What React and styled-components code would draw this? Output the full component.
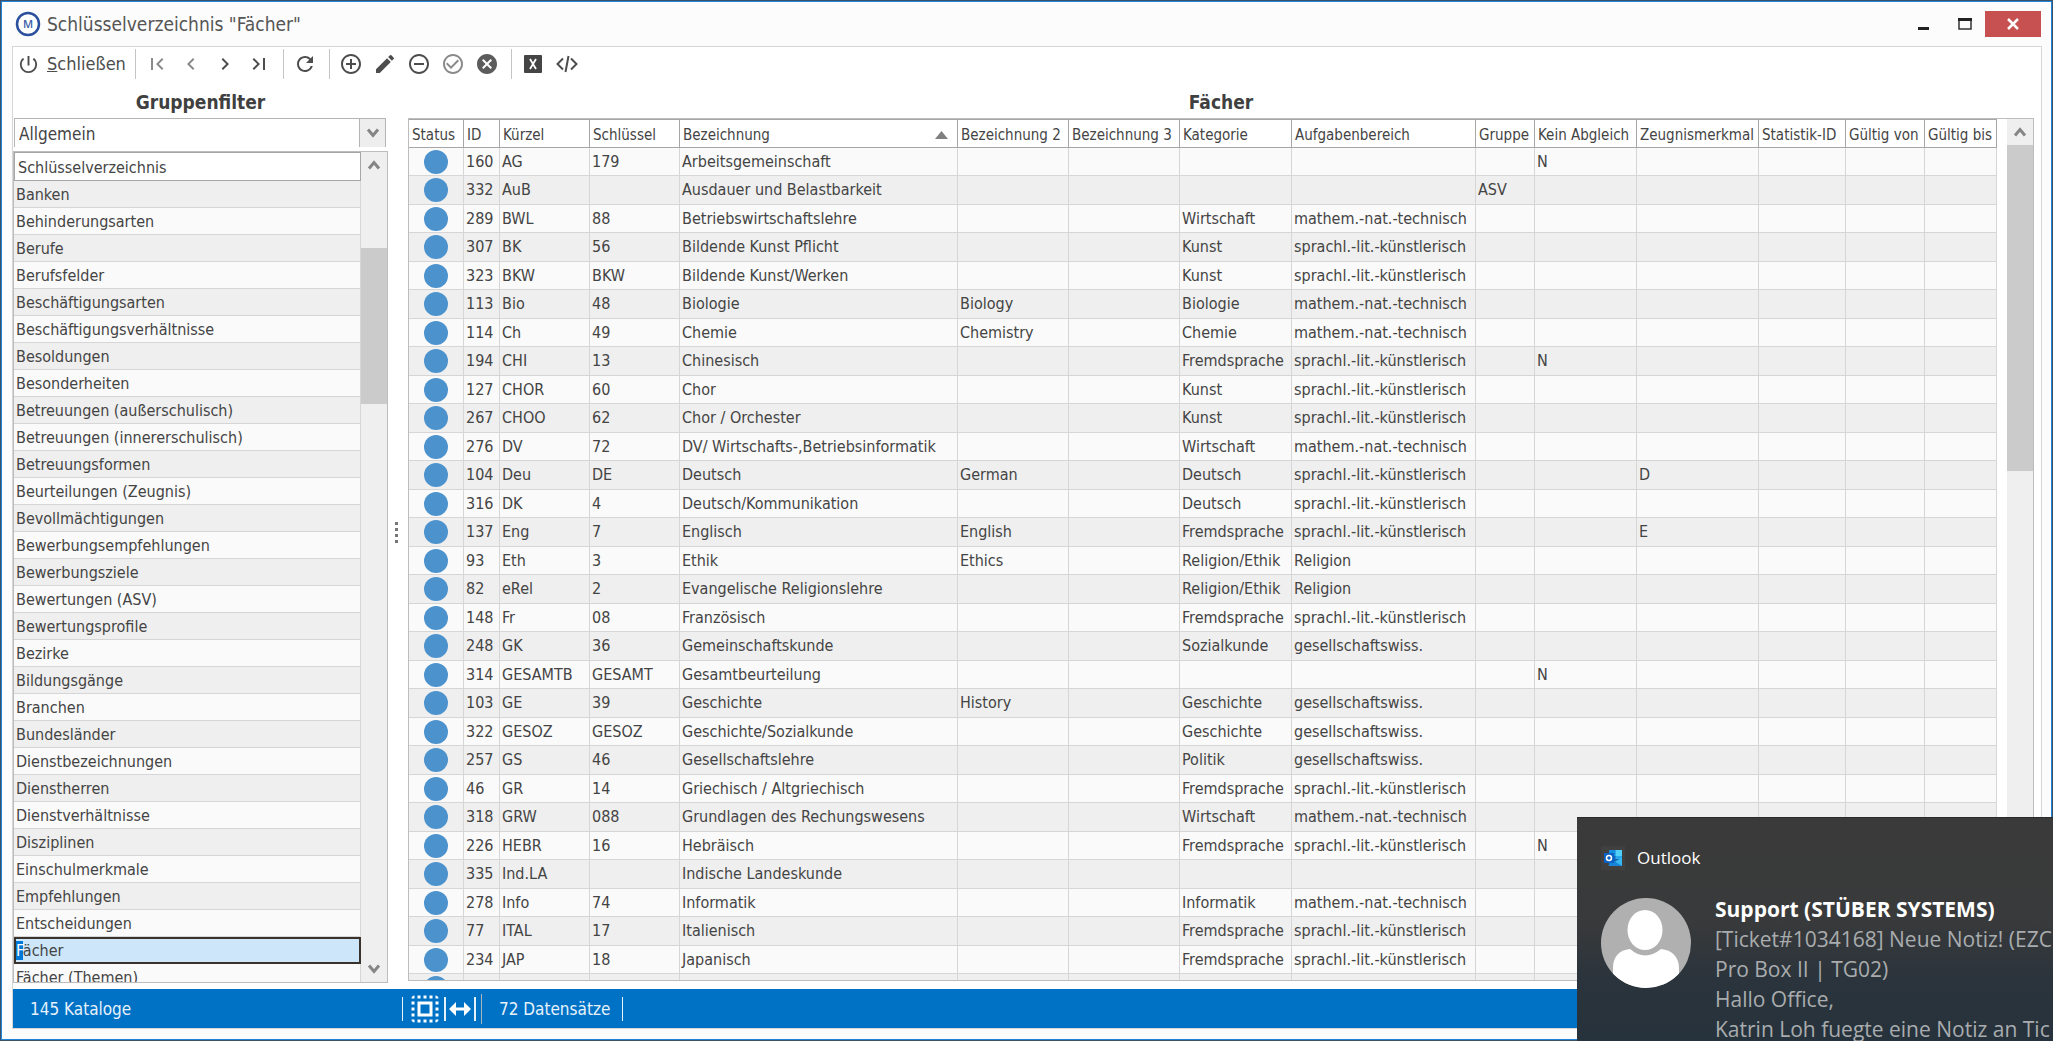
import React from "react";
import styled, { createGlobalStyle, css } from "styled-components";
import {
  MdPowerSettingsNew,
  MdFirstPage,
  MdChevronLeft,
  MdChevronRight,
  MdLastPage,
  MdRefresh,
  MdAddCircleOutline,
  MdEdit,
  MdRemoveCircleOutline,
  MdCheckCircleOutline,
  MdCancel,
  MdSelectAll,
} from "react-icons/md";

const Global = createGlobalStyle`
  * { box-sizing: border-box; }
  html, body { margin: 0; height: 100%; overflow: hidden; }
  body {
    font-family: Tahoma, "DejaVu Sans Condensed", "Noto Sans", sans-serif;
    font-size: 16px;
    line-height: 20px;
    color: #444;
  }
  button, select { font: inherit; color: inherit; }
`;

const Window = styled.div`
  height: 100vh;
  display: flex;
  flex-direction: column;
  padding: 1px 10px 11px 11px;
  background: #fcfcfc;
  border: 1px solid #3d5266;
  box-shadow: inset 0 0 0 1px #1f84dc;
  overflow: hidden;
`;

const TitleBar = styled.header`
  flex: none;
  height: 44px;
  display: flex;
  align-items: center;
  gap: 6px;
  padding: 0 1px 0 3px;
`;

const Title = styled.h1`
  flex: 1;
  margin: 0;
  font-size: 19px;
  line-height: 24px;
  font-weight: 400;
  color: #555;
`;

const WindowButton = styled.button`
  width: ${(p) => (p.$close ? 56 : 41)}px;
  height: 26px;
  padding: 0;
  border: 0;
  display: flex;
  align-items: center;
  justify-content: center;
  background: ${(p) => (p.$close ? "#c75050" : "transparent")};
`;

const WindowButtons = styled.div`
  display: flex;
`;

const Content = styled.main`
  flex: 1;
  min-height: 0;
  display: flex;
  flex-direction: column;
  background: #fff;
  border: 1px solid #d6d6d6;
`;

const Toolbar = styled.div`
  flex: none;
  display: flex;
  align-items: center;
  height: 34px;
  padding-left: 4px;
`;

const Separator = styled.span`
  width: 1px;
  height: 30px;
  margin: 0 4px 0 7px;
  background: #c4c4c4;
`;

const ToolButton = styled.button`
  width: 34px;
  height: 34px;
  padding: 0;
  border: 0;
  background: transparent;
  display: flex;
  align-items: center;
  justify-content: center;
  color: ${(p) => (p.$dim ? "#8a8a8a" : "#4d4d4d")};
`;

const CloseButton = styled(ToolButton)`
  width: auto;
  gap: 7px;
  padding-right: 2px;
  font-size: 18px;
`;

const Body = styled.div`
  flex: 1;
  min-height: 0;
  display: grid;
  grid-template-columns: 376px 15px minmax(0, 1fr);
  grid-template-rows: minmax(0, 1fr);
`;

const Panel = styled.section`
  min-width: 0;
  min-height: 0;
  display: flex;
  flex-direction: column;
  padding: ${(p) => p.$pad};
`;

const PanelTitle = styled.h2`
  flex: none;
  margin: 0;
  padding: 9px 0 4px;
  font-size: 19px;
  line-height: 24px;
  font-weight: 700;
  text-align: center;
  color: #404040;
`;

const Splitter = styled.div`
  display: flex;
  flex-direction: column;
  align-items: center;
  justify-content: center;
  gap: 3px;
`;

const Dot = styled.span`
  width: 3px;
  height: 3px;
  background: #777;
`;

const SelectWrap = styled.label`
  flex: none;
  display: grid;
  grid-template-columns: minmax(0, 1fr) 26px;
  height: 29px;
  margin: 0 2px 4px 1px;
  border: 1px solid #b4b4b4;
  border-bottom: 0;
`;

const Select = styled.select`
  appearance: none;
  border: 0;
  border-radius: 0;
  padding: 2px 4px 0;
  background: #fff;
  outline: 0;
  font-size: 17px;
`;

const ArrowBox = styled.span`
  display: flex;
  align-items: center;
  justify-content: center;
  background: #eee;
  border-left: 1px solid #b4b4b4;
`;

const Frame = styled.div`
  flex: 1;
  min-height: 0;
  display: flex;
  justify-content: space-between;
  border: 1px solid #bdbdbd;
  overflow: hidden;
`;

const Viewport = styled.div`
  flex: ${(p) => (p.$grow ? "1" : "0 1 auto")};
  min-width: 0;
  overflow: hidden;
`;

const Table = styled.table`
  table-layout: fixed;
  border-collapse: separate;
  border-spacing: 0;
  width: ${(p) => p.$width};
`;

const cell = css`
  padding: 0 0 0 2px;
  text-align: left;
  font-weight: 400;
  white-space: nowrap;
`;

const Th = styled.th`
  ${cell}
  height: 29px;
  padding-top: 2px;
  padding-left: 3px;
  font-size: ${(p) => (p.$boxed ? 16 : 15)}px;
  background: #fff;
  border: solid #a6a6a6;
  border-width: 1px 1px 1px 0;

  &:first-child {
    border-left-width: ${(p) => (p.$boxed ? 1 : 0)}px;
  }
`;

const HeadContent = styled.span`
  display: flex;
  align-items: center;
  justify-content: space-between;
  padding-right: 9px;
`;

const Td = styled.td`
  ${cell}
  border: solid #d6d6d6;
  border-width: 0 1px 1px 0;
`;

const StatusTd = styled(Td)`
  padding: 0;
`;

const DataRow = styled.tr`
  height: 28px;
  background: #fafafa;

  &:nth-child(even) {
    height: 29px;
    background: #efefef;
  }
`;

const ListRow = styled.tr`
  height: 27px;
  background: #efefef;

  &:nth-child(even) {
    background: #fafafa;
  }

  ${Td} {
    padding-top: 2px;
  }

  ${(p) =>
    p.$selected &&
    css`
      ${Td} {
        padding: 0;
        background: #cde6fa;
        border: 2px solid #3a332b;
      }
    `}
`;

const Mark = styled.mark`
  background: #0078d7;
  color: #fff;
`;

const Status = styled.span`
  display: block;
  width: 24px;
  height: 24px;
  margin: 0 auto;
  border-radius: 50%;
  background: #4c93ce;
`;

const Scrollbar = styled.div`
  flex: none;
  width: 26px;
  display: flex;
  flex-direction: column;
  background: #efefef;
`;

const ScrollArrow = styled.button`
  height: 26px;
  padding: 0;
  border: 0;
  background: transparent;
  display: flex;
  align-items: center;
  justify-content: center;
`;

const Track = styled.div`
  flex: 1;
  padding-top: ${(p) => p.$offset}px;
`;

const Thumb = styled.div`
  height: ${(p) => p.$size}px;
  background: #cbcbcb;
`;

const StatusBar = styled.footer`
  flex: none;
  display: flex;
  align-items: center;
  height: 39px;
  margin-top: 6px;
  background: #0072c6;
  color: #e6f1fa;
  font-size: 17px;
`;

const StatusText = styled.span`
  padding: 0 12px 0 17px;
  flex: 0 0 ${(p) => p.$basis || "auto"};
`;

const StatusLine = styled.span`
  width: ${(p) => (p.$bold ? 2 : 1)}px;
  height: 24px;
  background: #e6f1fa;
`;

const StatusDivider = styled.span`
  width: 1px;
  height: 30px;
  margin-left: 5px;
  background: #a9b4bd;
`;

const StatusButton = styled.button`
  padding: ${(p) => p.$pad};
  border: 0;
  background: transparent;
  color: #fff;
  display: flex;
`;

const Toast = styled.aside`
  position: absolute;
  right: 0;
  bottom: 0;
  width: 476px;
  height: 224px;
  overflow: hidden;
  padding: 28px 0 0 24px;
  background: linear-gradient(#3a3a3a 0%, #393a3b 45%, #2b343c 72%, #26323c 100%);
  border-top: 1px solid #2a2a2a;
  font-family: "Segoe UI", "Open Sans", "Noto Sans", sans-serif;
  white-space: nowrap;
`;

const ToastApp = styled.div`
  display: flex;
  align-items: center;
  gap: 12px;
  height: 24px;
  margin-bottom: 28px;
  color: #fff;
  font-size: 17px;
`;

const ToastMessage = styled.div`
  display: flex;
  gap: 24px;
`;

const ToastText = styled.div`
  margin-top: -4px;
  font-size: 21px;
  line-height: 30px;
  color: #a9acae;
`;

const Sender = styled.strong`
  display: block;
  font-weight: 700;
  color: #fff;
`;

const Line = styled.div``;

const Avatar = styled.svg`
  flex: none;
`;

function Chevron({ down }) {
  return (
    <svg width="14" height="12" viewBox="0 0 14 12" fill="none" stroke="#858585" strokeWidth="3">
      <path d={down ? "M2 2.500L7 8.500L12 2.500" : "M2 9.500L7 3.500L12 9.500"} />
    </svg>
  );
}

const catalogs = [
  "Banken", "Behinderungsarten", "Berufe", "Berufsfelder", "Beschäftigungsarten",
  "Beschäftigungsverhältnisse", "Besoldungen", "Besonderheiten", "Betreuungen (außerschulisch)",
  "Betreuungen (innererschulisch)", "Betreuungsformen", "Beurteilungen (Zeugnis)",
  "Bevollmächtigungen", "Bewerbungsempfehlungen", "Bewerbungsziele", "Bewertungen (ASV)",
  "Bewertungsprofile", "Bezirke", "Bildungsgänge", "Branchen", "Bundesländer",
  "Dienstbezeichnungen", "Dienstherren", "Dienstverhältnisse", "Disziplinen",
  "Einschulmerkmale", "Empfehlungen", "Entscheidungen", "Fächer", "Fächer (Themen)",
];

const columns = [
  ["Status", 55], ["ID", 36], ["Kürzel", 90], ["Schlüssel", 90], ["Bezeichnung", 278],
  ["Bezeichnung 2", 111], ["Bezeichnung 3", 111], ["Kategorie", 112], ["Aufgabenbereich", 184],
  ["Gruppe", 59], ["Kein Abgleich", 102], ["Zeugnismerkmal", 122], ["Statistik-ID", 87],
  ["Gültig von", 79], ["Gültig bis", 72],
];

const MNT = "mathem.-nat.-technisch";
const SLK = "sprachl.-lit.-künstlerisch";
const GES = "gesellschaftswiss.";

// id, short name, key, name, second name, category, area, group, no sync, certificate mark
const subjects = [
  ["160", "AG", "179", "Arbeitsgemeinschaft", "", "", "", "", "N"],
  ["332", "AuB", "", "Ausdauer und Belastbarkeit", "", "", "", "ASV"],
  ["289", "BWL", "88", "Betriebswirtschaftslehre", "", "Wirtschaft", MNT],
  ["307", "BK", "56", "Bildende Kunst Pflicht", "", "Kunst", SLK],
  ["323", "BKW", "BKW", "Bildende Kunst/Werken", "", "Kunst", SLK],
  ["113", "Bio", "48", "Biologie", "Biology", "Biologie", MNT],
  ["114", "Ch", "49", "Chemie", "Chemistry", "Chemie", MNT],
  ["194", "CHI", "13", "Chinesisch", "", "Fremdsprache", SLK, "", "N"],
  ["127", "CHOR", "60", "Chor", "", "Kunst", SLK],
  ["267", "CHOO", "62", "Chor / Orchester", "", "Kunst", SLK],
  ["276", "DV", "72", "DV/ Wirtschafts-,Betriebsinformatik", "", "Wirtschaft", MNT],
  ["104", "Deu", "DE", "Deutsch", "German", "Deutsch", SLK, "", "", "D"],
  ["316", "DK", "4", "Deutsch/Kommunikation", "", "Deutsch", SLK],
  ["137", "Eng", "7", "Englisch", "English", "Fremdsprache", SLK, "", "", "E"],
  ["93", "Eth", "3", "Ethik", "Ethics", "Religion/Ethik", "Religion"],
  ["82", "eRel", "2", "Evangelische Religionslehre", "", "Religion/Ethik", "Religion"],
  ["148", "Fr", "08", "Französisch", "", "Fremdsprache", SLK],
  ["248", "GK", "36", "Gemeinschaftskunde", "", "Sozialkunde", GES],
  ["314", "GESAMTB", "GESAMT", "Gesamtbeurteilung", "", "", "", "", "N"],
  ["103", "GE", "39", "Geschichte", "History", "Geschichte", GES],
  ["322", "GESOZ", "GESOZ", "Geschichte/Sozialkunde", "", "Geschichte", GES],
  ["257", "GS", "46", "Gesellschaftslehre", "", "Politik", GES],
  ["46", "GR", "14", "Griechisch / Altgriechisch", "", "Fremdsprache", SLK],
  ["318", "GRW", "088", "Grundlagen des Rechungswesens", "", "Wirtschaft", MNT],
  ["226", "HEBR", "16", "Hebräisch", "", "Fremdsprache", SLK, "", "N"],
  ["335", "Ind.LA", "", "Indische Landeskunde"],
  ["278", "Info", "74", "Informatik", "", "Informatik", MNT],
  ["77", "ITAL", "17", "Italienisch", "", "Fremdsprache", SLK],
  ["234", "JAP", "18", "Japanisch", "", "Fremdsprache", SLK],
  [],
];

function cellsOf([id, short, key, name, name2, category, area, group, noSync, mark]) {
  return [id, short, key, name, name2, "", category, area, group, noSync, mark, "", "", ""];
}

export default function App() {
  return (
    <>
      <Global />
      <Window>
        <TitleBar>
          <svg width="26" height="26" viewBox="0 0 26 26">
            <circle cx="13" cy="13" r="11" fill="#fff" stroke="#2a509d" strokeWidth="2.500" />
            <text x="13" y="17" textAnchor="middle" fontSize="11" fontWeight="600" fill="#3a5ca5" fontFamily="Open Sans">M</text>
          </svg>
          <Title>Schlüsselverzeichnis "Fächer"</Title>
          <WindowButtons>
            <WindowButton aria-label="Minimieren">
              <svg width="14" height="14"><path d="M1 10h11v3H1z" fill="#222" /></svg>
            </WindowButton>
            <WindowButton aria-label="Maximieren">
              <svg width="14" height="12">
                <path d="M1 1.500h12v9.500H1z" fill="none" stroke="#333" strokeWidth="1.500" />
                <path d="M0 0h14v3H0z" fill="#222" />
              </svg>
            </WindowButton>
            <WindowButton $close aria-label="Fenster schließen">
              <svg width="14" height="12" stroke="#fff" strokeWidth="2.500">
                <path d="M2 1L12 11M12 1L2 11" />
              </svg>
            </WindowButton>
          </WindowButtons>
        </TitleBar>

        <Content>
          <Toolbar>
            <CloseButton>
              <MdPowerSettingsNew size={23} />
              <span><u>S</u>chließen</span>
            </CloseButton>
            <Separator />
            <ToolButton $dim aria-label="Erster"><MdFirstPage size={24} /></ToolButton>
            <ToolButton $dim aria-label="Zurück"><MdChevronLeft size={24} /></ToolButton>
            <ToolButton aria-label="Weiter"><MdChevronRight size={24} /></ToolButton>
            <ToolButton aria-label="Letzter"><MdLastPage size={24} /></ToolButton>
            <Separator />
            <ToolButton aria-label="Aktualisieren"><MdRefresh size={24} /></ToolButton>
            <Separator />
            <ToolButton aria-label="Neu"><MdAddCircleOutline size={24} /></ToolButton>
            <ToolButton aria-label="Bearbeiten"><MdEdit size={24} /></ToolButton>
            <ToolButton aria-label="Löschen"><MdRemoveCircleOutline size={24} /></ToolButton>
            <ToolButton $dim aria-label="Übernehmen"><MdCheckCircleOutline size={24} /></ToolButton>
            <ToolButton aria-label="Verwerfen"><MdCancel size={24} color="#5c5c5c" /></ToolButton>
            <Separator />
            <ToolButton aria-label="Excel-Export">
              <svg width="18" height="18">
                <rect width="18" height="18" rx="1" fill="#444" />
                <path d="M6 4L12 14M12 4L6 14" stroke="#fff" strokeWidth="1.800" />
              </svg>
            </ToolButton>
            <ToolButton aria-label="XML-Export">
              <svg width="22" height="18" fill="none" stroke="#4d4d4d" strokeWidth="2">
                <path d="M7 3.500L1.500 9L7 14.500M15 3.500L20.500 9L15 14.500M12.500 1L9.500 17" />
              </svg>
            </ToolButton>
          </Toolbar>

          <Body>
            <Panel $pad="0 1px 0 0">
              <PanelTitle>Gruppenfilter</PanelTitle>
              <SelectWrap>
                <Select aria-label="Gruppenfilter" defaultValue="Allgemein">
                  <option>Allgemein</option>
                </Select>
                <ArrowBox><Chevron down /></ArrowBox>
              </SelectWrap>
              <Frame>
                <Viewport $grow>
                  <Table $width="100%">
                    <thead>
                      <tr><Th $boxed>Schlüsselverzeichnis</Th></tr>
                    </thead>
                    <tbody>
                      {catalogs.map((name) => (
                        <ListRow key={name} $selected={name === "Fächer"}>
                          <Td>{name === "Fächer" ? <><Mark>F</Mark>ächer</> : name}</Td>
                        </ListRow>
                      ))}
                    </tbody>
                  </Table>
                </Viewport>
                <Scrollbar>
                  <ScrollArrow aria-label="Nach oben"><Chevron /></ScrollArrow>
                  <Track $offset={70}><Thumb $size={156} /></Track>
                  <ScrollArrow aria-label="Nach unten"><Chevron down /></ScrollArrow>
                </Scrollbar>
              </Frame>
            </Panel>

            <Splitter><Dot /><Dot /><Dot /><Dot /></Splitter>

            <Panel $pad="0 7px 2px 4px">
              <PanelTitle>Fächer</PanelTitle>
              <Frame>
                <Viewport>
                  <Table $width="1587px">
                    <colgroup>
                      {columns.map(([name, width]) => <col key={name} width={width} />)}
                    </colgroup>
                    <thead>
                      <tr>
                        {columns.map(([name]) => (
                          <Th key={name}>
                            {name === "Bezeichnung" ? (
                              <HeadContent>
                                {name}
                                <svg width="13" height="8"><path d="M0 8L6.500 0L13 8z" fill="#808080" /></svg>
                              </HeadContent>
                            ) : name}
                          </Th>
                        ))}
                      </tr>
                    </thead>
                    <tbody>
                      {subjects.map((subject, row) => (
                        <DataRow key={row}>
                          <StatusTd><Status /></StatusTd>
                          {cellsOf(subject).map((value, i) => <Td key={i}>{value}</Td>)}
                        </DataRow>
                      ))}
                    </tbody>
                  </Table>
                </Viewport>
                <Scrollbar>
                  <ScrollArrow aria-label="Nach oben"><Chevron /></ScrollArrow>
                  <Track $offset={0}><Thumb $size={326} /></Track>
                  <ScrollArrow aria-label="Nach unten"><Chevron down /></ScrollArrow>
                </Scrollbar>
              </Frame>
            </Panel>
          </Body>

          <StatusBar>
            <StatusText $basis="389px">145 Kataloge</StatusText>
            <StatusLine />
            <StatusButton $pad="0 1px 0 4px" aria-label="Alles auswählen"><MdSelectAll size={36} /></StatusButton>
            <StatusLine $bold />
            <StatusButton $pad="0 3px" aria-label="Spaltenbreite anpassen">
              <svg width="22" height="14" fill="#fff">
                <path d="M0 7L7 0V5.500H15V0L22 7L15 14V8.500H7V14z" />
              </svg>
            </StatusButton>
            <StatusLine $bold />
            <StatusDivider />
            <StatusText>72 Datensätze</StatusText>
            <StatusLine />
          </StatusBar>
        </Content>
      </Window>

      <Toast>
        <ToastApp>
          <svg width="24" height="24" viewBox="0 0 24 24">
            <rect width="24" height="24" fill="#404040" />
            <path d="M8 4h13v16H8z" fill="#1066b5" />
            <path d="M8 4h6.500v6H8z" fill="#1490df" />
            <path d="M14.500 4H21v6h-6.500z" fill="#50d0f8" />
            <path d="M14.500 10H21v3h-6.500z" fill="#28a8ea" />
            <path d="M7 20L21 11.500V20z" fill="#35b8f1" />
            <path d="M8 12L21 20H8z" fill="#1784d9" />
            <rect x="3" y="7" width="10" height="10" fill="#0a62c4" />
            <circle cx="8" cy="12" r="2.500" fill="none" stroke="#fff" strokeWidth="1.500" />
          </svg>
          <span>Outlook</span>
        </ToastApp>
        <ToastMessage>
          <Avatar width="90" height="90" viewBox="0 0 90 90">
            <clipPath id="face"><circle cx="45" cy="45" r="45" /></clipPath>
            <circle cx="45" cy="45" r="45" fill="#b0b0b0" />
            <g clipPath="url(#face)" fill="#fff">
              <ellipse cx="44" cy="32" rx="17.500" ry="20" />
              <path d="M12 90V70C12 59 18 52 29 51Q44 64 60 51C71 52 78 59 78 70V90z" />
            </g>
          </Avatar>
          <ToastText>
            <Sender>Support (STÜBER SYSTEMS)</Sender>
            <Line>[Ticket#1034168] Neue Notiz! (EZC</Line>
            <Line>Pro Box II | TG02)</Line>
            <Line>Hallo Office,</Line>
            <Line>Katrin Loh fuegte eine Notiz an Tic</Line>
          </ToastText>
        </ToastMessage>
      </Toast>
    </>
  );
}
